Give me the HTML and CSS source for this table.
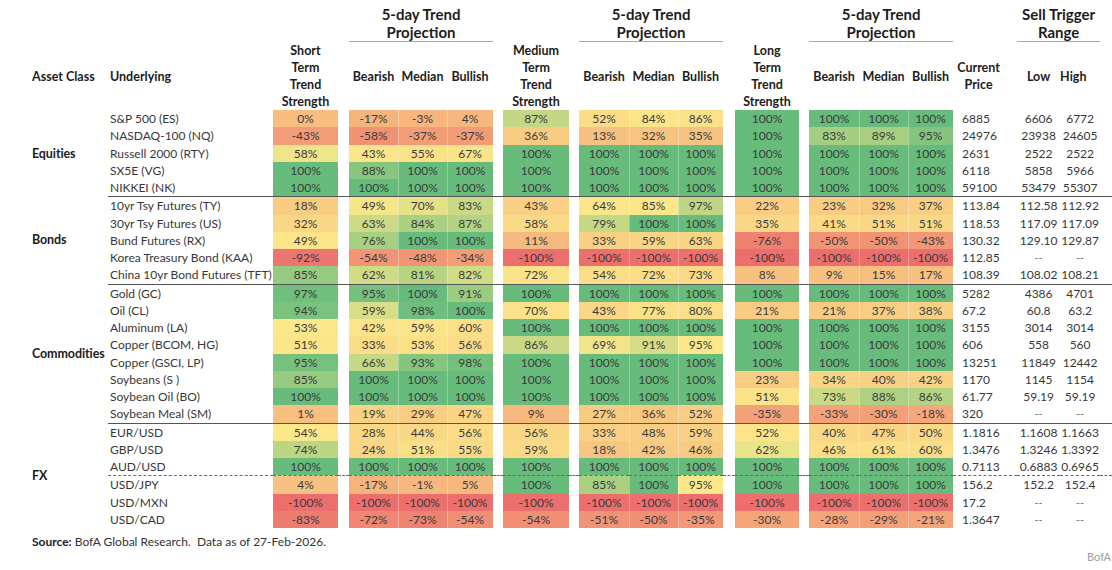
FILE: index.html
```html
<!DOCTYPE html>
<html lang="en">
<head>
<meta charset="utf-8">
<title>Trend Strength Monitor</title>
<link rel="stylesheet" href="styles.css">
</head>
<body>
<table class="grid">
  <colgroup>
    <col class="w-asset"><col class="w-und"><col class="w-str"><col class="w-g11">
    <col class="w-b"><col class="w-m"><col class="w-u1"><col class="w-g10">
    <col class="w-med"><col class="w-g10"><col class="w-b2"><col class="w-m"><col class="w-u">
    <col class="w-g12"><col class="w-long"><col class="w-g10"><col class="w-b2"><col class="w-m"><col class="w-u">
    <col class="w-cur"><col class="w-lo"><col class="w-hi"><col class="w-pad">
  </colgroup>
  <thead>
    <tr class="top">
      <th colspan="4"></th>
      <th colspan="3" class="proj">5-day Trend<br>Projection</th>
      <th colspan="3"></th>
      <th colspan="3" class="proj">5-day Trend<br>Projection</th>
      <th colspan="3"></th>
      <th colspan="3" class="proj">5-day Trend<br>Projection</th>
      <th></th>
      <th colspan="2" class="proj">Sell Trigger<br>Range</th>
      <th></th>
    </tr>
    <tr class="sub">
      <th class="asset-h">Asset Class</th>
      <th class="und-h">Underlying</th>
      <th>Short<br>Term<br>Trend<br>Strength</th>
      <th></th>
      <th>Bearish</th><th>Median</th><th>Bullish</th>
      <th></th>
      <th>Medium<br>Term<br>Trend<br>Strength</th>
      <th></th>
      <th>Bearish</th><th>Median</th><th>Bullish</th>
      <th></th>
      <th>Long<br>Term<br>Trend<br>Strength</th>
      <th></th>
      <th>Bearish</th><th>Median</th><th>Bullish</th>
      <th class="cur-h">Current<br>Price</th>
      <th>Low</th>
      <th class="hi-h">High</th>
      <th></th>
    </tr>
  </thead>
  <tbody>
    <!-- Equities -->
    <tr>
      <td class="asset" rowspan="5">Equities</td>
      <td class="u">S&amp;P 500 (ES)</td><td class="h">0%</td><td class="g"></td>
      <td class="h">-17%</td><td class="h m">-3%</td><td class="h m">4%</td><td class="g"></td>
      <td class="h">87%</td><td class="g"></td>
      <td class="h">52%</td><td class="h m">84%</td><td class="h m">86%</td><td class="g"></td>
      <td class="h">100%</td><td class="g"></td>
      <td class="h">100%</td><td class="h m">100%</td><td class="h m">100%</td>
      <td class="cur">6885</td><td class="lo">6606</td><td class="hi">6772</td><td></td>
    </tr>
    <tr>
      <td class="u">NASDAQ-100 (NQ)</td><td class="h">-43%</td><td class="g"></td>
      <td class="h">-58%</td><td class="h m">-37%</td><td class="h m">-37%</td><td class="g"></td>
      <td class="h">36%</td><td class="g"></td>
      <td class="h">13%</td><td class="h m">32%</td><td class="h m">35%</td><td class="g"></td>
      <td class="h">100%</td><td class="g"></td>
      <td class="h">83%</td><td class="h m">89%</td><td class="h m">95%</td>
      <td class="cur">24976</td><td class="lo">23938</td><td class="hi">24605</td><td></td>
    </tr>
    <tr>
      <td class="u">Russell 2000 (RTY)</td><td class="h">58%</td><td class="g"></td>
      <td class="h">43%</td><td class="h m">55%</td><td class="h m">67%</td><td class="g"></td>
      <td class="h">100%</td><td class="g"></td>
      <td class="h">100%</td><td class="h m">100%</td><td class="h m">100%</td><td class="g"></td>
      <td class="h">100%</td><td class="g"></td>
      <td class="h">100%</td><td class="h m">100%</td><td class="h m">100%</td>
      <td class="cur">2631</td><td class="lo">2522</td><td class="hi">2522</td><td></td>
    </tr>
    <tr>
      <td class="u">SX5E (VG)</td><td class="h">100%</td><td class="g"></td>
      <td class="h">88%</td><td class="h m">100%</td><td class="h m">100%</td><td class="g"></td>
      <td class="h">100%</td><td class="g"></td>
      <td class="h">100%</td><td class="h m">100%</td><td class="h m">100%</td><td class="g"></td>
      <td class="h">100%</td><td class="g"></td>
      <td class="h">100%</td><td class="h m">100%</td><td class="h m">100%</td>
      <td class="cur">6118</td><td class="lo">5858</td><td class="hi">5966</td><td></td>
    </tr>
    <tr>
      <td class="u">NIKKEI (NK)</td><td class="h">100%</td><td class="g"></td>
      <td class="h">100%</td><td class="h m">100%</td><td class="h m">100%</td><td class="g"></td>
      <td class="h">100%</td><td class="g"></td>
      <td class="h">100%</td><td class="h m">100%</td><td class="h m">100%</td><td class="g"></td>
      <td class="h">100%</td><td class="g"></td>
      <td class="h">100%</td><td class="h m">100%</td><td class="h m">100%</td>
      <td class="cur">59100</td><td class="lo">53479</td><td class="hi">55307</td><td></td>
    </tr>
    <!-- Bonds -->
    <tr class="sep">
      <td class="asset" rowspan="5">Bonds</td>
      <td class="u">10yr Tsy Futures (TY)</td><td class="h">18%</td><td class="g"></td>
      <td class="h">49%</td><td class="h m">70%</td><td class="h m">83%</td><td class="g"></td>
      <td class="h">43%</td><td class="g"></td>
      <td class="h">64%</td><td class="h m">85%</td><td class="h m">97%</td><td class="g"></td>
      <td class="h">22%</td><td class="g"></td>
      <td class="h">23%</td><td class="h m">32%</td><td class="h m">37%</td>
      <td class="cur">113.84</td><td class="lo">112.58</td><td class="hi">112.92</td><td></td>
    </tr>
    <tr>
      <td class="u">30yr Tsy Futures (US)</td><td class="h">32%</td><td class="g"></td>
      <td class="h">63%</td><td class="h m">84%</td><td class="h m">87%</td><td class="g"></td>
      <td class="h">58%</td><td class="g"></td>
      <td class="h">79%</td><td class="h m">100%</td><td class="h m">100%</td><td class="g"></td>
      <td class="h">35%</td><td class="g"></td>
      <td class="h">41%</td><td class="h m">51%</td><td class="h m">51%</td>
      <td class="cur">118.53</td><td class="lo">117.09</td><td class="hi">117.09</td><td></td>
    </tr>
    <tr>
      <td class="u">Bund Futures (RX)</td><td class="h">49%</td><td class="g"></td>
      <td class="h">76%</td><td class="h m">100%</td><td class="h m">100%</td><td class="g"></td>
      <td class="h">11%</td><td class="g"></td>
      <td class="h">33%</td><td class="h m">59%</td><td class="h m">63%</td><td class="g"></td>
      <td class="h">-76%</td><td class="g"></td>
      <td class="h">-50%</td><td class="h m">-50%</td><td class="h m">-43%</td>
      <td class="cur">130.32</td><td class="lo">129.10</td><td class="hi">129.87</td><td></td>
    </tr>
    <tr>
      <td class="u">Korea Treasury Bond (KAA)</td><td class="h">-92%</td><td class="g"></td>
      <td class="h">-54%</td><td class="h m">-48%</td><td class="h m">-34%</td><td class="g"></td>
      <td class="h">-100%</td><td class="g"></td>
      <td class="h">-100%</td><td class="h m">-100%</td><td class="h m">-100%</td><td class="g"></td>
      <td class="h">-100%</td><td class="g"></td>
      <td class="h">-100%</td><td class="h m">-100%</td><td class="h m">-100%</td>
      <td class="cur">112.85</td><td class="lo dash-v">--</td><td class="hi dash-v">--</td><td></td>
    </tr>
    <tr>
      <td class="u">China 10yr Bond Futures (TFT)</td><td class="h">85%</td><td class="g"></td>
      <td class="h">62%</td><td class="h m">81%</td><td class="h m">82%</td><td class="g"></td>
      <td class="h">72%</td><td class="g"></td>
      <td class="h">54%</td><td class="h m">72%</td><td class="h m">73%</td><td class="g"></td>
      <td class="h">8%</td><td class="g"></td>
      <td class="h">9%</td><td class="h m">15%</td><td class="h m">17%</td>
      <td class="cur">108.39</td><td class="lo">108.02</td><td class="hi">108.21</td><td></td>
    </tr>
    <!-- Commodities -->
    <tr class="sep">
      <td class="asset" rowspan="8">Commodities</td>
      <td class="u">Gold (GC)</td><td class="h">97%</td><td class="g"></td>
      <td class="h">95%</td><td class="h m">100%</td><td class="h m">91%</td><td class="g"></td>
      <td class="h">100%</td><td class="g"></td>
      <td class="h">100%</td><td class="h m">100%</td><td class="h m">100%</td><td class="g"></td>
      <td class="h">100%</td><td class="g"></td>
      <td class="h">100%</td><td class="h m">100%</td><td class="h m">100%</td>
      <td class="cur">5282</td><td class="lo">4386</td><td class="hi">4701</td><td></td>
    </tr>
    <tr>
      <td class="u">Oil (CL)</td><td class="h">94%</td><td class="g"></td>
      <td class="h">59%</td><td class="h m">98%</td><td class="h m">100%</td><td class="g"></td>
      <td class="h">70%</td><td class="g"></td>
      <td class="h">43%</td><td class="h m">77%</td><td class="h m">80%</td><td class="g"></td>
      <td class="h">21%</td><td class="g"></td>
      <td class="h">21%</td><td class="h m">37%</td><td class="h m">38%</td>
      <td class="cur">67.2</td><td class="lo">60.8</td><td class="hi">63.2</td><td></td>
    </tr>
    <tr>
      <td class="u">Aluminum (LA)</td><td class="h">53%</td><td class="g"></td>
      <td class="h">42%</td><td class="h m">59%</td><td class="h m">60%</td><td class="g"></td>
      <td class="h">100%</td><td class="g"></td>
      <td class="h">100%</td><td class="h m">100%</td><td class="h m">100%</td><td class="g"></td>
      <td class="h">100%</td><td class="g"></td>
      <td class="h">100%</td><td class="h m">100%</td><td class="h m">100%</td>
      <td class="cur">3155</td><td class="lo">3014</td><td class="hi">3014</td><td></td>
    </tr>
    <tr>
      <td class="u">Copper (BCOM, HG)</td><td class="h">51%</td><td class="g"></td>
      <td class="h">33%</td><td class="h m">53%</td><td class="h m">56%</td><td class="g"></td>
      <td class="h">86%</td><td class="g"></td>
      <td class="h">69%</td><td class="h m">91%</td><td class="h m">95%</td><td class="g"></td>
      <td class="h">100%</td><td class="g"></td>
      <td class="h">100%</td><td class="h m">100%</td><td class="h m">100%</td>
      <td class="cur">606</td><td class="lo">558</td><td class="hi">560</td><td></td>
    </tr>
    <tr>
      <td class="u">Copper (GSCI, LP)</td><td class="h">95%</td><td class="g"></td>
      <td class="h">66%</td><td class="h m">93%</td><td class="h m">98%</td><td class="g"></td>
      <td class="h">100%</td><td class="g"></td>
      <td class="h">100%</td><td class="h m">100%</td><td class="h m">100%</td><td class="g"></td>
      <td class="h">100%</td><td class="g"></td>
      <td class="h">100%</td><td class="h m">100%</td><td class="h m">100%</td>
      <td class="cur">13251</td><td class="lo">11849</td><td class="hi">12442</td><td></td>
    </tr>
    <tr>
      <td class="u">Soybeans (S )</td><td class="h">85%</td><td class="g"></td>
      <td class="h">100%</td><td class="h m">100%</td><td class="h m">100%</td><td class="g"></td>
      <td class="h">100%</td><td class="g"></td>
      <td class="h">100%</td><td class="h m">100%</td><td class="h m">100%</td><td class="g"></td>
      <td class="h">23%</td><td class="g"></td>
      <td class="h">34%</td><td class="h m">40%</td><td class="h m">42%</td>
      <td class="cur">1170</td><td class="lo">1145</td><td class="hi">1154</td><td></td>
    </tr>
    <tr>
      <td class="u">Soybean Oil (BO)</td><td class="h">100%</td><td class="g"></td>
      <td class="h">100%</td><td class="h m">100%</td><td class="h m">100%</td><td class="g"></td>
      <td class="h">100%</td><td class="g"></td>
      <td class="h">100%</td><td class="h m">100%</td><td class="h m">100%</td><td class="g"></td>
      <td class="h">51%</td><td class="g"></td>
      <td class="h">73%</td><td class="h m">88%</td><td class="h m">86%</td>
      <td class="cur">61.77</td><td class="lo">59.19</td><td class="hi">59.19</td><td></td>
    </tr>
    <tr>
      <td class="u">Soybean Meal (SM)</td><td class="h">1%</td><td class="g"></td>
      <td class="h">19%</td><td class="h m">29%</td><td class="h m">47%</td><td class="g"></td>
      <td class="h">9%</td><td class="g"></td>
      <td class="h">27%</td><td class="h m">36%</td><td class="h m">52%</td><td class="g"></td>
      <td class="h">-35%</td><td class="g"></td>
      <td class="h">-33%</td><td class="h m">-30%</td><td class="h m">-18%</td>
      <td class="cur">320</td><td class="lo dash-v">--</td><td class="hi dash-v">--</td><td></td>
    </tr>
    <!-- FX -->
    <tr class="sep">
      <td class="asset" rowspan="6">FX</td>
      <td class="u">EUR/USD</td><td class="h">54%</td><td class="g"></td>
      <td class="h">28%</td><td class="h m">44%</td><td class="h m">56%</td><td class="g"></td>
      <td class="h">56%</td><td class="g"></td>
      <td class="h">33%</td><td class="h m">48%</td><td class="h m">59%</td><td class="g"></td>
      <td class="h">52%</td><td class="g"></td>
      <td class="h">40%</td><td class="h m">47%</td><td class="h m">50%</td>
      <td class="cur">1.1816</td><td class="lo">1.1608</td><td class="hi">1.1663</td><td></td>
    </tr>
    <tr>
      <td class="u">GBP/USD</td><td class="h">74%</td><td class="g"></td>
      <td class="h">24%</td><td class="h m">51%</td><td class="h m">55%</td><td class="g"></td>
      <td class="h">59%</td><td class="g"></td>
      <td class="h">18%</td><td class="h m">42%</td><td class="h m">46%</td><td class="g"></td>
      <td class="h">62%</td><td class="g"></td>
      <td class="h">46%</td><td class="h m">61%</td><td class="h m">60%</td>
      <td class="cur">1.3476</td><td class="lo">1.3246</td><td class="hi">1.3392</td><td></td>
    </tr>
    <tr>
      <td class="u">AUD/USD</td><td class="h">100%</td><td class="g"></td>
      <td class="h">100%</td><td class="h m">100%</td><td class="h m">100%</td><td class="g"></td>
      <td class="h">100%</td><td class="g"></td>
      <td class="h">100%</td><td class="h m">100%</td><td class="h m">100%</td><td class="g"></td>
      <td class="h">100%</td><td class="g"></td>
      <td class="h">100%</td><td class="h m">100%</td><td class="h m">100%</td>
      <td class="cur">0.7113</td><td class="lo">0.6883</td><td class="hi">0.6965</td><td></td>
    </tr>
    <tr class="dash">
      <td class="u">USD/JPY</td><td class="h">4%</td><td class="g"></td>
      <td class="h">-17%</td><td class="h m">-1%</td><td class="h m">5%</td><td class="g"></td>
      <td class="h">100%</td><td class="g"></td>
      <td class="h">85%</td><td class="h m">100%</td><td class="h m">95%</td><td class="g"></td>
      <td class="h">100%</td><td class="g"></td>
      <td class="h">100%</td><td class="h m">100%</td><td class="h m">100%</td>
      <td class="cur">156.2</td><td class="lo">152.2</td><td class="hi">152.4</td><td></td>
    </tr>
    <tr>
      <td class="u">USD/MXN</td><td class="h">-100%</td><td class="g"></td>
      <td class="h">-100%</td><td class="h m">-100%</td><td class="h m">-100%</td><td class="g"></td>
      <td class="h">-100%</td><td class="g"></td>
      <td class="h">-100%</td><td class="h m">-100%</td><td class="h m">-100%</td><td class="g"></td>
      <td class="h">-100%</td><td class="g"></td>
      <td class="h">-100%</td><td class="h m">-100%</td><td class="h m">-100%</td>
      <td class="cur">17.2</td><td class="lo dash-v">--</td><td class="hi dash-v">--</td><td></td>
    </tr>
    <tr>
      <td class="u">USD/CAD</td><td class="h">-83%</td><td class="g"></td>
      <td class="h">-72%</td><td class="h m">-73%</td><td class="h m">-54%</td><td class="g"></td>
      <td class="h">-54%</td><td class="g"></td>
      <td class="h">-51%</td><td class="h m">-50%</td><td class="h m">-35%</td><td class="g"></td>
      <td class="h">-30%</td><td class="g"></td>
      <td class="h">-28%</td><td class="h m">-29%</td><td class="h m">-21%</td>
      <td class="cur">1.3647</td><td class="lo dash-v">--</td><td class="hi dash-v">--</td><td></td>
    </tr>
  </tbody>
</table>
<p class="source"><b>Source:</b> BofA Global Research.&nbsp; Data as of 27-Feb-2026.</p>
<div class="brand">BofA</div>
<script src="script.js"></script>
</body>
</html>
```

FILE: styles.css
```css
html, body {
  margin: 0;
  padding: 0;
  background: #ffffff;
}
body {
  width: 1112px;
  height: 570px;
  overflow: hidden;
  font-family: Lato, "Liberation Sans", sans-serif;
  color: #333333;
}

.grid {
  width: 1112px;
  table-layout: fixed;
  border-collapse: separate;
  border-spacing: 0;
}

.w-asset { width: 108px; }
.w-und { width: 165px; }
.w-str { width: 65px; }
.w-g11 { width: 11px; }
.w-g10 { width: 10px; }
.w-g12 { width: 12px; }
.w-b { width: 49px; }
.w-b2 { width: 50px; }
.w-m { width: 49px; }
.w-u1 { width: 46px; }
.w-u { width: 45px; }
.w-med { width: 66px; }
.w-long { width: 64px; }
.w-cur { width: 64px; }
.w-lo { width: 43px; }
.w-hi { width: 40px; }
.w-pad { width: 12px; }

.grid th {
  padding: 0;
  font-size: 12.5px;
  line-height: 17px;
  font-weight: 700;
  color: #1c1c1c;
  text-align: center;
  vertical-align: middle;
  white-space: nowrap;
}
.grid tr.top th {
  font-size: 15px;
  line-height: 18px;
  padding-top: 5px;
  vertical-align: top;
}
.grid th.proj {
  border-bottom: 1px solid #a8a8a8;
}
.grid th.asset-h {
  text-align: left;
  padding-left: 32px;
}
.grid th.und-h {
  text-align: left;
  padding-left: 2px;
}
.grid th.cur-h {
  padding-left: 4px;
  padding-right: 17px;
}
.grid th.hi-h {
  padding-right: 20px;
}

.grid td {
  padding: 0;
  height: 17.25px;
  font-size: 12px;
  line-height: 17px;
  text-align: center;
  white-space: nowrap;
  color: #383838;
}
.grid td.asset {
  text-align: left;
  padding-left: 32px;
  font-size: 12.5px;
  letter-spacing: -0.1px;
  font-weight: 700;
  color: #1c1c1c;
  vertical-align: middle;
}
.grid td.u {
  text-align: left;
  padding-left: 2px;
}
.grid td.h {
  background: #fbe88a;
  color: #3a3a3a;
}
.grid td.m {
  box-shadow: inset 1px 0 0 rgba(255, 255, 255, 0.3);
}
.grid td.cur {
  text-align: left;
  padding-left: 9px;
}
.grid td.lo {
  text-align: center;
}
.grid td.hi {
  text-align: center;
}
.grid td.dash-v {
  color: #777777;
  font-size: 11px;
}

.grid tr.sep td:not(.asset) {
  border-top: 1px solid #555555;
}
.grid tr.dash td:not(.asset) {
  border-top: 1px dashed #6a6a6a;
}

.source {
  margin: 6px 0 0 0;
  padding-left: 32px;
  font-size: 12px;
  line-height: 16px;
  color: #333333;
}
.source b {
  color: #1c1c1c;
}

.brand {
  text-align: right;
  padding-right: 1px;
  font-size: 11px;
  line-height: 14px;
  color: #a0a0a0;
}
```

FILE: script.js
```js
(function () {
  var low = [237, 111, 109];
  var mid = [252, 232, 138];
  var high = [103, 188, 124];
  var rows = document.querySelectorAll('.grid tbody tr');
  var cols = [];
  rows.forEach(function (r) {
    r.querySelectorAll('td.h').forEach(function (td, i) {
      (cols[i] = cols[i] || []).push(td);
    });
  });
  function mix(a, b, t) {
    return a.map(function (x, k) { return Math.round(x + (b[k] - x) * t); });
  }
  cols.forEach(function (cells) {
    var v = cells.map(function (td) { return parseFloat(td.textContent); });
    var s = v.slice().sort(function (a, b) { return a - b; });
    var n = s.length, mn = s[0], mx = s[n - 1];
    var r = 0.5 * (n - 1), f = Math.floor(r);
    var md = s[f] + (s[Math.min(f + 1, n - 1)] - s[f]) * (r - f);
    cells.forEach(function (td, i) {
      var x = v[i], c;
      if (x <= md) {
        c = mix(low, mid, md === mn ? 1 : (x - mn) / (md - mn));
      } else {
        c = mix(mid, high, mx === md ? 0 : (x - md) / (mx - md));
      }
      td.style.backgroundColor = 'rgb(' + c.join(',') + ')';
    });
  });
})();
```
